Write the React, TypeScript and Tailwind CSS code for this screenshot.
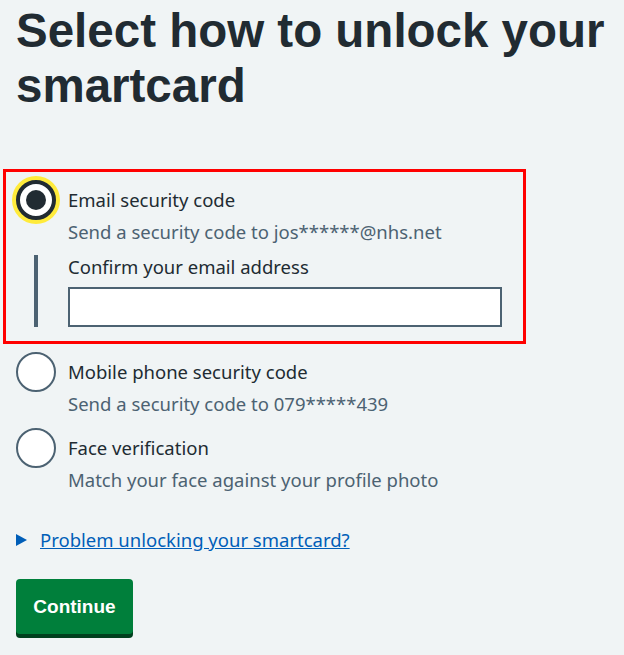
import { useState } from "react";

const font = { fontFamily: "'Liberation Sans', Arial, sans-serif" };
const body = { fontFamily: "'Noto Sans', 'Liberation Sans', Arial, sans-serif" };

type Option = {
  id: string;
  label: string;
  hint: string;
};

const options: Option[] = [
  { id: "email", label: "Email security code", hint: "Send a security code to jos******@nhs.net" },
  { id: "mobile", label: "Mobile phone security code", hint: "Send a security code to 079*****439" },
  { id: "face", label: "Face verification", hint: "Match your face against your profile photo" },
];

function Radio({ checked }: { checked: boolean }) {
  if (checked) {
    return (
      <span className="relative flex h-10 w-10 shrink-0 items-center justify-center rounded-full border-4 border-[#212b32] bg-white shadow-[0_0_0_4px_#ffeb3b]">
        <span className="h-5 w-5 rounded-full bg-[#212b32]" />
      </span>
    );
  }
  return <span className="h-10 w-10 shrink-0 rounded-full border-2 border-[#4c6272] bg-white" />;
}

export default function App() {
  const [selected, setSelected] = useState("email");
  const [email, setEmail] = useState("");

  return (
    <div className="min-h-[655px] bg-[#f0f4f5] px-4 pt-[3px] text-[#212b32]" style={font}>
      <h1 className="text-[47.5px] font-bold leading-[55px]">Select how to unlock your smartcard</h1>

      <div className="mt-[56px] flex flex-col" style={body}>
        {options.map((opt, i) => {
          const checked = selected === opt.id;
          const item = (
            <div
              className="flex cursor-pointer items-start"
              onClick={() => setSelected(opt.id)}
            >
              <Radio checked={checked} />
              <div className="ml-3 flex flex-col">
                <span className="text-[18.5px] leading-[40px]">{opt.label}</span>
                <span className="text-[18.5px] leading-[24px] text-[#4c6272]">{opt.hint}</span>
              </div>
            </div>
          );

          if (i === 0) {
            return (
              <div
                key={opt.id}
                className="-ml-[13px] w-[523px] border-[3px] border-[#ff0000] pb-[14px] pl-[10px] pt-2"
              >
                {item}
                {checked && (
                  <div className="ml-[18px] mt-[11px] border-l-4 border-[#4c6272] pl-[30px]">
                    <label className="block text-[18.5px] leading-[24px]">Confirm your email address</label>
                    <input
                      type="email"
                      value={email}
                      onChange={(e) => setEmail(e.target.value)}
                      className="mt-2 block h-10 w-[434px] border-2 border-[#4c6272] bg-white px-2 text-[19px] outline-none"
                    />
                  </div>
                )}
              </div>
            );
          }

          return (
            <div key={opt.id} className={i === 1 ? "mt-2" : "mt-3"}>
              {item}
            </div>
          );
        })}
      </div>

      {/* details summary */}
      <div className="mt-9 flex items-center" style={body}>
        <svg width="12" height="12" viewBox="0 0 12 12" className="mr-3 shrink-0">
          <polygon points="0,0 11,6 0,12" fill="#005eb8" />
        </svg>
        <a href="#" className="text-[18.5px] leading-[24px] text-[#005eb8] underline">
          Problem unlocking your smartcard?
        </a>
      </div>

      <button className="mt-[27px] h-[55px] w-[117px] rounded bg-[#007f3b] text-[19px] font-bold leading-[24px] text-white shadow-[0_4px_0_#00401e]">
        Continue
      </button>
    </div>
  );
}
